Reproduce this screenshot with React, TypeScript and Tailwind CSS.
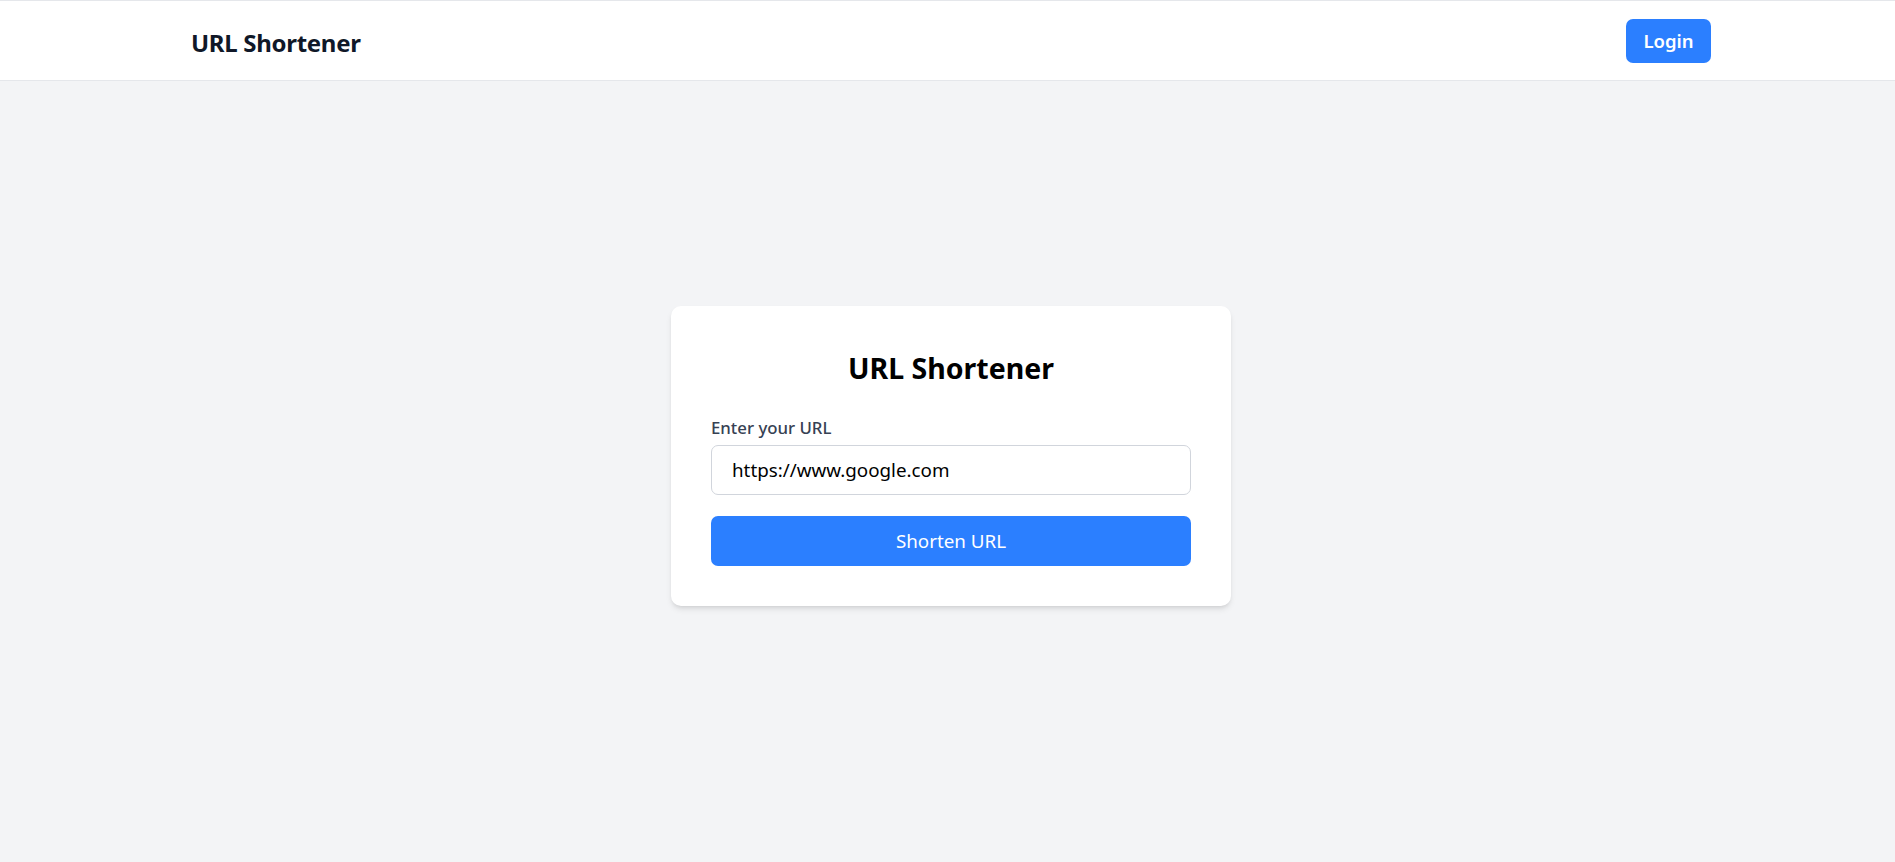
import { useState } from 'react';

const App = () => {
  const [url, setUrl] = useState('https://www.google.com');

  return (
    <div className="min-h-screen bg-[#f3f4f6] font-['Noto_Sans',sans-serif]">
      {/* Header */}
      <header className="h-[81px] bg-white border-t border-b border-[#e5e7eb]">
        <div className="h-full flex items-center justify-between pl-[191px] pr-[184px]">
          <h1 className="pt-[5px] text-[24px] tracking-[-0.3px] font-bold text-[#101828]">URL Shortener</h1>
          <button className="w-[85px] h-[44px] rounded-[7px] bg-[#2b7fff] text-white text-[18.5px] font-semibold">
            Login
          </button>
        </div>
      </header>

      {/* Card */}
      <main className="flex justify-center pt-[225px] pl-[7px]">
        <div className="w-[560px] bg-white rounded-[10px] shadow-md p-10">
          <h2 className="mt-1 text-[28.5px] leading-[36px] font-bold text-black text-center mb-7">URL Shortener</h2>
          <label className="block text-[16.8px] leading-[28px] font-medium text-[#364153] mb-[3px]">
            Enter your URL
          </label>
          <input
            value={url}
            onChange={(e) => setUrl(e.target.value)}
            className="w-full h-[50px] px-5 border border-[#d1d5dc] rounded-[7px] text-[18.8px] text-black outline-none"
          />
          <button className="mt-[21px] w-full h-[50px] rounded-[7px] bg-[#2b7fff] text-white text-[18.8px]">
            Shorten URL
          </button>
        </div>
      </main>
    </div>
  );
};

export default App;
